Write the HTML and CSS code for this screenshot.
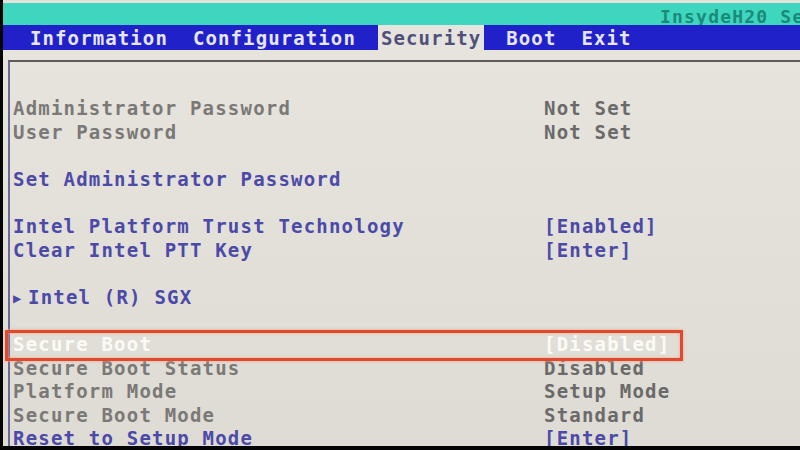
FILE: index.html
```html
<!DOCTYPE html>
<html lang="en">
<head>
  <meta charset="UTF-8" />
  <title>InsydeH20 Setup Utility</title>
  <link rel="stylesheet" href="styles.css">
</head>
<body>
  <div class="screen">
    <div class="title-bar">
      <span class="brand">InsydeH20 Setup Utility</span>
    </div>

    <nav class="menu">
      <span>Information</span>
      <span>Configuration</span>
      <span class="active">Security</span>
      <span>Boot</span>
      <span>Exit</span>
    </nav>

    <div class="panel">
      <div class="box">
        <div class="row info"><span>Administrator Password</span><span class="val">Not Set</span></div>
        <div class="row info"><span>User Password</span><span class="val">Not Set</span></div>
        <div class="row blank"></div>
        <div class="row link"><span>Set Administrator Password</span><span></span></div>
        <div class="row blank"></div>
        <div class="row link"><span>Intel Platform Trust Technology</span><span>[Enabled]</span></div>
        <div class="row link"><span>Clear Intel PTT Key</span><span>[Enter]</span></div>
        <div class="row blank"></div>
        <div class="row link"><span><span class="arrow">&#9654;</span>Intel (R) SGX</span><span></span></div>
        <div class="row blank"></div>
        <div class="row selected"><span>Secure Boot</span><span>[Disabled]</span></div>
        <div class="row info"><span>Secure Boot Status</span><span class="val">Disabled</span></div>
        <div class="row info"><span>Platform Mode</span><span class="val">Setup Mode</span></div>
        <div class="row info"><span>Secure Boot Mode</span><span class="val">Standard</span></div>
        <div class="row link"><span>Reset to Setup Mode</span><span>[Enter]</span></div>
      </div>
      <div class="mark"></div>
    </div>
  </div>
</body>
</html>
```

FILE: styles.css
```css
body {
  margin: 0;
  background: #050505;
  font-family: "DejaVu Sans Mono", "Liberation Mono", monospace;
  font-weight: bold;
  font-size: 19px;
  letter-spacing: 1.2px;
}

.screen {
  width: 797px;
  height: 446px;
  margin-left: 3px;
  overflow: hidden;
  background: #e3e1d9;
}

.title-bar {
  height: 22px;
  margin-top: 3px;
  background: #3fd6bf;
  padding-left: 657px;
  white-space: nowrap;
  overflow: hidden;
}

.brand {
  color: #1a8a7a;
  font-size: 18px;
  line-height: 28px;
}

.menu {
  display: flex;
  gap: 19px;
  height: 25px;
  padding-left: 24px;
  background: #2121c9;
  color: #e6e6fb;
  line-height: 26px;
  letter-spacing: 1.1px;
}

.menu span {
  padding: 0 3px;
}

.menu .active {
  background: #e6e4de;
  color: #50507a;
}

.panel {
  position: relative;
  padding-top: 10px;
  height: 411px;
  background: linear-gradient(to bottom, #e6e4dd, #dddbd3);
}

.box {
  margin-left: 5px;
  height: 100%;
  padding-top: 35px;
  padding-left: 3px;
  border-top: 2px solid #5c5c5c;
  border-left: 2px solid #6a6a98;
}

.row {
  display: grid;
  grid-template-columns: 531px 1fr;
  height: 23.6px;
  line-height: 23.6px;
  white-space: nowrap;
}

.info {
  color: #7b7977;
}

.info .val {
  color: #6a6a6a;
}

.link {
  color: #4c4aa8;
}

.selected {
  color: #fbfbf6;
}

.arrow {
  display: inline-block;
  width: 15px;
  font-size: 14px;
  vertical-align: 1px;
}

.mark {
  position: absolute;
  left: 2px;
  top: 280px;
  width: 672px;
  height: 25px;
  border: 3px solid #df4a2e;
  box-shadow: 0 0 3px #f2a486, inset 0 0 3px #f2a486;
}
```
